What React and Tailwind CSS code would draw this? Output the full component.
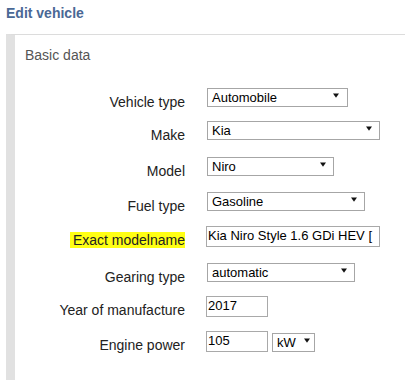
import React from 'react';

function Arrow() {
	return (
		<svg width="6" height="5" viewBox="0 0 6 5" className="shrink-0">
			<polygon points="0,0.5 6,0.5 3,4.8" fill="#111" />
		</svg>
	);
}

function Select({ value, className }) {
	return (
		<div
			className={`ml-px flex h-[19px] items-start justify-between border border-[#a6a6a6] bg-white pl-[4px] text-[13px] leading-[17px] text-black ${className}`}
		>
			<span className="whitespace-nowrap">{value}</span>
			<span className="mt-[4px]">
				<Arrow />
			</span>
		</div>
	);
}

function TextInput({ value, className }) {
	return (
		<div
			className={`h-[21px] overflow-hidden whitespace-nowrap border border-[#a9a9a9] bg-white pl-px text-[13px] leading-[18px] text-black ${className}`}
		>
			{value}
		</div>
	);
}

function Row({ label, height, highlight, children }) {
	return (
		<div className={`flex items-start ${height}`}>
			<div className="w-[170px] shrink-0 pt-[6px] text-right text-[14px] leading-[16px] text-[#222]">
				{highlight ? <span className="bg-[#ffff14] pl-[3px]">{label}</span> : label}
			</div>
			<div className="ml-[21px] flex items-start">{children}</div>
		</div>
	);
}

export default function App() {
	return (
		<div className="h-[380px] w-[405px] overflow-hidden bg-white font-['Liberation_Sans',Arial,sans-serif]">
			<h1 className="pl-[6px] pt-[5px] text-[14px] font-bold leading-[16px] text-[#4a6895]">Edit vehicle</h1>
			<div className="ml-[6px] mt-[13px] h-[346px] border-l-[9px] border-t border-l-[#e1e1e1] border-t-[#dcdcdc]">
				<div className="pl-[10px] pt-[12px] text-[14px] leading-[16px] text-[#555]">Basic data</div>
				<div className="mt-[25px]">
					<Row label="Vehicle type" height="h-[33px]">
						<Select value="Automobile" className="w-[141px] pr-[8px]" />
					</Row>
					<Row label="Make" height="h-[36px]">
						<Select value="Kia" className="w-[173px] pr-[7px]" />
					</Row>
					<Row label="Model" height="h-[35px]">
						<Select value="Niro" className="w-[127px] pr-[7px]" />
					</Row>
					<Row label="Fuel type" height="h-[34px]">
						<Select value="Gasoline" className="w-[158px] pr-[7px]" />
					</Row>
					<Row label="Exact modelname" height="h-[37px]" highlight>
						<TextInput value="Kia Niro Style 1.6 GDi HEV [" className="w-[174px]" />
					</Row>
					<Row label="Gearing type" height="h-[33px]">
						<Select value="automatic" className="w-[148px] pr-[7px]" />
					</Row>
					<Row label="Year of manufacture" height="h-[35px]">
						<TextInput value="2017" className="w-[62px]" />
					</Row>
					<Row label="Engine power" height="h-[35px]">
						<TextInput value="105" className="w-[62px]" />
						<div className="ml-[3px] mt-[2px]">
							<Select value="kW" className="w-[43px] pr-[4px]" />
						</div>
					</Row>
				</div>
			</div>
		</div>
	);
}
